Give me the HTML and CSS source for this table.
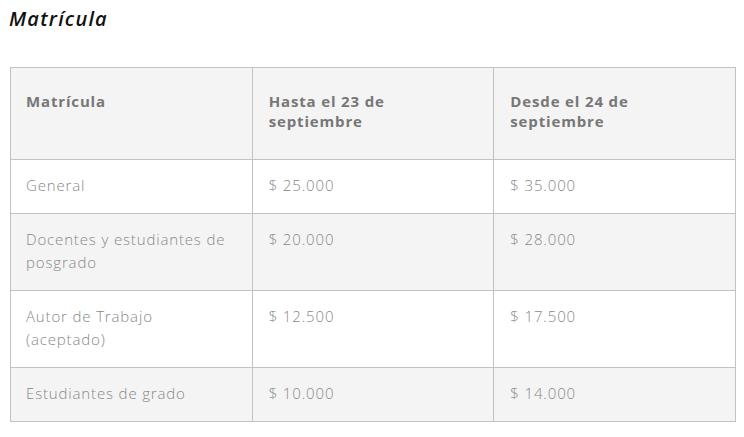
FILE: index.html
```html
<!DOCTYPE html>
<html lang="es">
<head>
<meta charset="utf-8">
<title>Matrícula</title>
<link rel="stylesheet" href="styles.css">
</head>
<body>
<h2 class="title">Matrícula</h2>
<table class="fees">
  <thead>
    <tr>
      <th>Matrícula</th>
      <th>Hasta el 23 de<br>septiembre</th>
      <th>Desde el 24 de<br>septiembre</th>
    </tr>
  </thead>
  <tbody>
    <tr>
      <td>General</td>
      <td>$ 25.000</td>
      <td>$ 35.000</td>
    </tr>
    <tr class="alt">
      <td>Docentes y estudiantes de posgrado</td>
      <td>$ 20.000</td>
      <td>$ 28.000</td>
    </tr>
    <tr>
      <td>Autor de Trabajo<br>(aceptado)</td>
      <td>$ 12.500</td>
      <td>$ 17.500</td>
    </tr>
    <tr class="alt">
      <td>Estudiantes de grado</td>
      <td>$ 10.000</td>
      <td>$ 14.000</td>
    </tr>
  </tbody>
</table>
</body>
</html>
```
FILE: styles.css
```css
html, body {
  margin: 0;
  padding: 0;
  background: #ffffff;
}
body {
  padding: 6px 8px 0 10px;
  font-family: "Open Sans", "DejaVu Sans", sans-serif;
}
.title {
  margin: 0 0 35px -1px;
  font-size: 20px;
  line-height: 26px;
  letter-spacing: 1.2px;
  font-style: italic;
  font-weight: 600;
  color: #111111;
}
.fees {
  width: 726px;
  border-collapse: collapse;
  table-layout: fixed;
}
.fees th,
.fees td {
  border: 1px solid #c2c2c2;
  text-align: left;
  vertical-align: top;
  padding: 14px 10px 16px 15px;
  font-size: 15px;
  line-height: 23px;
  letter-spacing: 0.85px;
  color: #888888;
  font-weight: 300;
}
.fees th {
  background: #f4f4f4;
  color: #777777;
  font-weight: 700;
  line-height: 20px;
  padding-top: 23px;
  padding-bottom: 28px;
}
.fees tr.alt td {
  background: #f4f4f4;
}
.fees th:nth-child(n+2),
.fees td:nth-child(n+2) {
  padding-left: 16px;
}
```
